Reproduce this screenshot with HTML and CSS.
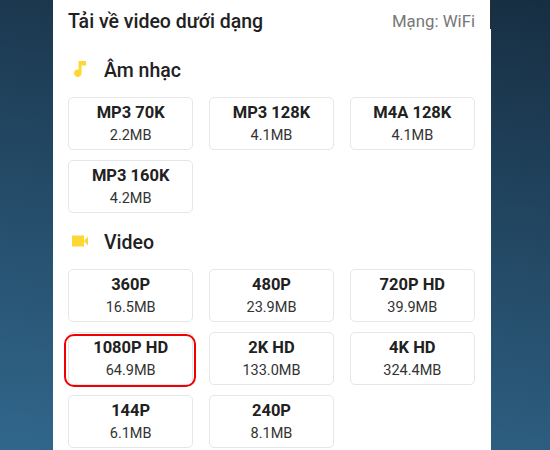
FILE: index.html
```html
<!DOCTYPE html>
<html lang="vi">
<head>
<meta charset="utf-8">
<title>Tải về video dưới dạng</title>
<link rel="stylesheet" href="styles.css">
</head>
<body>
<main class="panel">
  <header class="head">
    <h1 class="title">Tải về video dưới dạng</h1>
    <span class="net">Mạng: WiFi</span>
  </header>
  <section class="sec sec-music">
    <h2 class="sec-head">
      <svg class="ico" width="20" height="20" viewBox="0 0 20 20"><path fill="#fdd835" d="M10.6 1H18V5.4H13.6V13.2A3.8 3.8 0 1 1 10.6 9.5Z"/></svg>
      <span>Âm nhạc</span>
    </h2>
    <div class="grid">
      <div class="card"><b>MP3 70K</b><span>2.2MB</span></div>
      <div class="card"><b>MP3 128K</b><span>4.1MB</span></div>
      <div class="card"><b>M4A 128K</b><span>4.1MB</span></div>
      <div class="card"><b>MP3 160K</b><span>4.2MB</span></div>
    </div>
  </section>
  <section class="sec sec-video">
    <h2 class="sec-head">
      <svg class="ico" width="20" height="20" viewBox="0 0 20 20"><path fill="#fdd835" d="M4 4.5H16V15.5H4Z M16.4 9.2 20 5.5V14.5L16.4 10.8Z"/></svg>
      <span>Video</span>
    </h2>
    <div class="grid">
      <div class="card"><b>360P</b><span>16.5MB</span></div>
      <div class="card"><b>480P</b><span>23.9MB</span></div>
      <div class="card"><b>720P HD</b><span>39.9MB</span></div>
      <div class="card picked"><b>1080P HD</b><span>64.9MB</span></div>
      <div class="card"><b>2K HD</b><span>133.0MB</span></div>
      <div class="card"><b>4K HD</b><span>324.4MB</span></div>
      <div class="card"><b>144P</b><span>6.1MB</span></div>
      <div class="card"><b>240P</b><span>8.1MB</span></div>
    </div>
  </section>
</main>
</body>
</html>
```
FILE: styles.css
```css
* { box-sizing: border-box; }
html, body { margin: 0; height: 100%; }
body {
  width: 550px;
  height: 450px;
  overflow: hidden;
  background: linear-gradient(190deg, #172e42 0%, #31678c 100%);
  font-family: Roboto, "Liberation Sans", sans-serif;
  color: #212121;
}
.panel {
  position: relative;
  width: 438px;
  height: 450px;
  margin-left: 53px;
  padding: 0 16px 0 15px;
  background: #fff;
  overflow: hidden;
}
.panel::after {
  content: "";
  position: absolute;
  top: 0;
  right: 0;
  width: 1px;
  height: 29px;
  background: #2a2a2a;
}
.head {
  display: flex;
  justify-content: space-between;
  align-items: center;
  height: 42px;
}
.title { margin: 0; font-size: 19.5px; font-weight: 500; }
.net { font-size: 16.8px; color: #777; }
.sec-head {
  display: flex;
  align-items: center;
  gap: 16px;
  margin: 0;
  font-size: 19.5px;
  font-weight: 500;
}
.sec-head span { padding-top: 2px; }
.sec-music .sec-head { height: 55px; }
.sec-video .sec-head { height: 56px; }
.ico { flex: none; }
.grid {
  display: grid;
  grid-template-columns: repeat(3, 1fr);
  grid-auto-rows: 53px;
  column-gap: 15.5px;
  row-gap: 10px;
}
.card {
  position: relative;
  display: flex;
  flex-direction: column;
  align-items: center;
  justify-content: center;
  gap: 4px;
  padding-top: 1px;
  border: 1px solid #e6e6e6;
  border-radius: 5px;
  background: #fff;
}
.card b { font-size: 16.5px; font-weight: 700; line-height: 20px; }
.card span { font-size: 14.5px; line-height: 18px; color: #333; }
.picked::after {
  content: "";
  position: absolute;
  left: -5px;
  right: -4px;
  top: 1px;
  bottom: -3px;
  border: 2px solid #f00000;
  border-radius: 10px;
}
```
